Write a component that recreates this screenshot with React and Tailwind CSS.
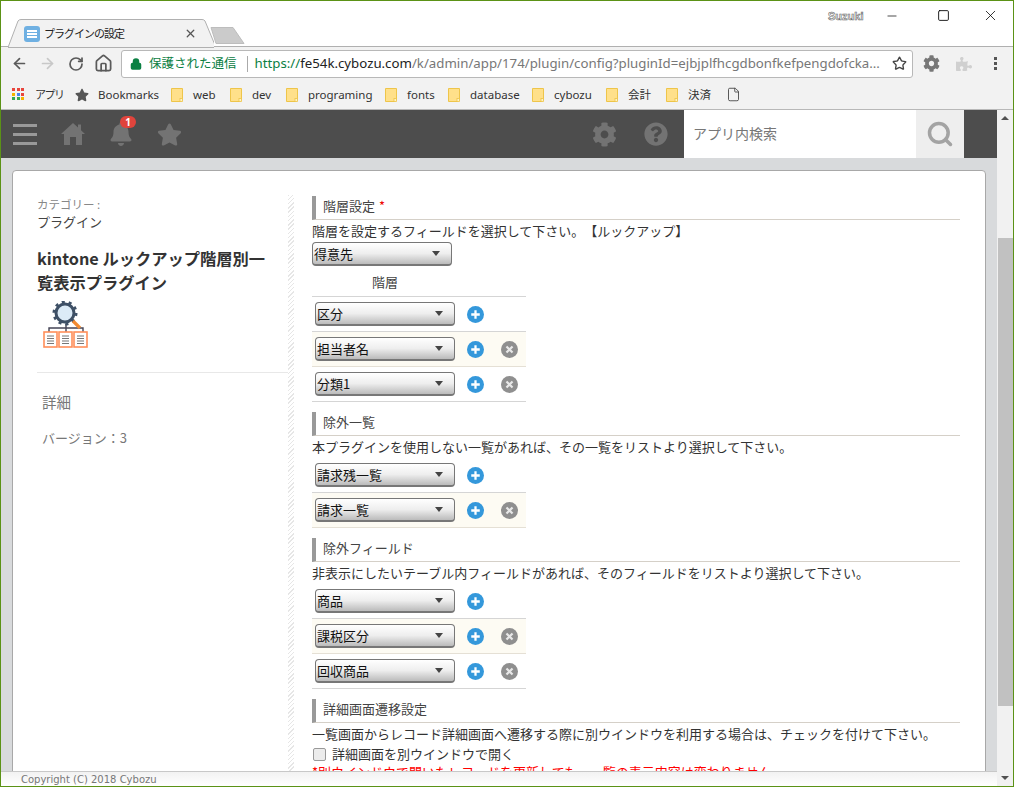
import { ArrowLeft, ArrowRight, RotateCw, Home, Star, Search, Lock, File, Minus, Square, X } from 'lucide-react';
import { FaBell, FaStar, FaCog, FaQuestionCircle, FaPuzzlePiece } from 'react-icons/fa';

function Folder() {
    return (
        <svg width="12" height="14" viewBox="0 0 12 14" className="shrink-0">
            <path d="M.5.5h11v11.5l-1.5 1.5H.5z" fill="#ffe08a" stroke="#eec54a" />
            <rect x="9" y="10.5" width="2.5" height="3" fill="#fff3c4" stroke="#eec54a" strokeWidth=".8" />
        </svg>
    );
}

function Bookmark({ label, width }) {
    return (
        <div className="flex items-center gap-[10px] shrink-0" style={{ width }}>
            <Folder />
            <span>{label}</span>
        </div>
    );
}

function AppsGrid() {
    const colors = ['#e8453c', '#e8453c', '#e8453c', '#f4b400', '#4285f4', '#e8453c', '#34a853', '#34a853', '#f4b400'];
    return (
        <div className="grid grid-cols-3 gap-[1px] w-[13px] h-[13px] shrink-0">
            {colors.map((c, i) => <span key={i} className="w-[3px] h-[3px]" style={{ backgroundColor: c }} />)}
        </div>
    );
}

function PluginSelect({ label, wide }) {
    return (
        <div className={`flex items-center justify-between h-[24px] rounded-[4px] border border-[#777] border-b-2 bg-gradient-to-b from-white via-[#eee] to-[#bbb] pl-[1px] pr-[11px] text-[13px] text-[#111] shrink-0 ${wide ? 'w-[140px]' : 'w-[140px] ml-[3px]'}`}>
            <span>{label}</span>
            <span className="w-0 h-0 border-x-[4px] border-x-transparent border-t-[5px] border-t-[#444]" />
        </div>
    );
}

function PlusBtn() {
    return (
        <svg width="17" height="17" viewBox="0 0 18 18" className="shrink-0">
            <circle cx="9" cy="9" r="9" fill="#3498db" />
            <path d="M9 4.500v9M4.500 9h9" stroke="#fff" strokeWidth="2.400" />
        </svg>
    );
}

function RemoveBtn() {
    return (
        <svg width="17" height="17" viewBox="0 0 18 18" className="shrink-0">
            <circle cx="9" cy="9" r="9" fill="#8f8f8f" />
            <path d="M5.800 5.800l6.400 6.400M12.200 5.800l-6.400 6.400" stroke="#e8e8e8" strokeWidth="2.400" />
        </svg>
    );
}

function Row({ label, removable, tinted }) {
    return (
        <div className={`w-[214px] h-[35px] pt-[5px] flex items-start gap-[12px] border-b ${tinted ? 'bg-[#fdfbf3] border-[#e5e0d5]' : 'border-[#d5d5d5]'}`}>
            <PluginSelect label={label} />
            <div className="flex gap-[17px] pt-[4px]">
                <PlusBtn />
                {removable && <RemoveBtn />}
            </div>
        </div>
    );
}

function SectionHead({ children }) {
    return (
        <div className="h-[24px] border-l-[4px] border-l-[#999] border-b border-b-[#d5d0c8] pl-[7px] text-[13px] leading-[20px] text-[#444] [text-spacing-trim:space-all]">
            {children}
        </div>
    );
}

function Desc({ children }) {
    return <p className="h-[22px] text-[13px] leading-[22px] text-[#333] whitespace-nowrap [text-spacing-trim:space-all]">{children}</p>;
}

function PluginLogo() {
    return (
        <svg width="46" height="47" viewBox="0 0 46 47">
            <path d="M6 31v-4h34v4M23 23v8" fill="none" stroke="#445" strokeWidth="1.400" />
            <circle cx="22" cy="12" r="9" fill="#dcebf7" stroke="#3e5066" strokeWidth="3" />
            <circle cx="22" cy="12" r="11" fill="none" stroke="#3e5066" strokeWidth="3" strokeDasharray="3 3.900" />
            <path d="M30 20l7 7" stroke="#f28a30" strokeWidth="3.200" />
            {[1, 16, 31].map(x => (
                <g key={x}>
                    <rect x={x} y="31" width="13" height="15" fill="#fff" stroke="#ff8f5a" strokeWidth="1.600" />
                    <path d={`M${x + 3} 35h7M${x + 3} 37.5h7M${x + 3} 40h7M${x + 3} 42.5h7`} stroke="#777" strokeWidth="1.200" />
                </g>
            ))}
        </svg>
    );
}

function KintoneHome() {
    return (
        <svg width="24" height="24" viewBox="0 0 24 24" className="ml-[24px] fill-[#737373]">
            <path d="M12 1l5 4.500V2.500h3v5.700l4 3.800h-3v11h-6v-8H9v8H3V12H0z" />
        </svg>
    );
}

export default function App() {
    return (
        <div className="w-[1014px] h-[787px] border border-[#5b9216] flex flex-col overflow-hidden bg-white font-['Noto_Sans_CJK_JP','Noto_Sans',sans-serif]">
            {/* window title + tabs */}
            <div className="h-[46px] relative shrink-0 border-b border-[#b0b0b0]">
                <div className="absolute left-[7px] top-[18px] w-[206px] h-[28px]">
                    <svg width="206" height="29" viewBox="0 0 206 29" className="absolute inset-0">
                        <path d="M0 28.500L10 2q1-1.500 3-1.500h181q2 0 3 1.500l11 26.500z" fill="#f2f2f2" stroke="#b0b0b0" />
                    </svg>
                    <div className="absolute left-[16px] top-[7px] w-[16px] h-[16px] rounded-[3px] bg-[#6fb0e2] flex flex-col justify-center items-center gap-[1px]">
                        <span className="w-[10px] h-[2px] bg-white" />
                        <span className="w-[10px] h-[2px] bg-white" />
                        <span className="w-[10px] h-[2px] bg-white" />
                    </div>
                    <span className="absolute left-[36px] top-[5px] text-[11px] tracking-[-1px] leading-[18px] text-[#222] whitespace-nowrap">プラグインの設定</span>
                    <X size={13} strokeWidth={2.4} className="absolute left-[176px] top-[8px] text-[#555]" />
                </div>
                <svg width="36" height="19" viewBox="0 0 36 19" className="absolute left-[209px] top-[25px]">
                    <path d="M1 1.500h22l11 16H6z" fill="#cbcbcb" stroke="#bdbdbd" />
                </svg>
                <span className="absolute left-[827px] top-[8px] text-[11px] leading-[15px] font-bold text-white [-webkit-text-stroke:0.6px_#666] font-['Liberation_Sans',sans-serif]">Suzuki</span>
                <Minus size={14} strokeWidth={1.2} className="absolute left-[884px] top-[8px] text-black" />
                <Square size={13} strokeWidth={1.6} className="absolute left-[936px] top-[8px] text-black" />
                <X size={17} strokeWidth={1.1} className="absolute left-[981px] top-[6px] text-black" />
            </div>

            {/* toolbar */}
            <div className="h-[33px] bg-[#f2f2f2] flex items-center shrink-0 pl-[10px] text-[#5a5a5a]">
                <ArrowLeft size={17} strokeWidth={2.4} />
                <ArrowRight size={17} strokeWidth={2.4} className="ml-[11px] text-[#c8c8c8]" />
                <RotateCw size={16} strokeWidth={2.6} className="ml-[12px]" />
                <Home size={19} strokeWidth={2.2} className="ml-[10px]" />
                <div className="ml-[8px] w-[792px] h-[28px] bg-white border border-[#b8b8b8] rounded-[3px] flex items-center pl-[8px] pr-[5px] text-[13.250px] whitespace-nowrap font-['Noto_Sans',sans-serif]">
                    <Lock size={12} strokeWidth={3} className="text-[#0b8043] fill-[#0b8043] shrink-0" />
                    <span className="ml-[7px] text-[12.500px] text-[#0b8043] font-['Noto_Sans_CJK_JP',sans-serif]">保護された通信</span>
                    <span className="ml-[10px] w-px h-[16px] bg-[#aaa]" />
                    <span className="ml-[7px] text-[#0b8043]">https://</span>
                    <span className="text-[#222]">fe54k.cybozu.com</span>
                    <span className="text-[#777] flex-1 overflow-hidden">/k/admin/app/174/plugin/config?pluginId=ejbjplfhcgdbonfkefpengdofcka...</span>
                    <Star size={15} strokeWidth={2.2} className="ml-[8px] text-[#444] shrink-0" />
                </div>
                <FaCog size={17} className="ml-[10px] text-[#777]" />
                <FaPuzzlePiece size={16} className="ml-[16px] text-[#d0d0d0]" />
                <div className="ml-[22px] flex flex-col gap-[2px]">
                    <span className="w-[3px] h-[3px] bg-[#555]" />
                    <span className="w-[3px] h-[3px] bg-[#555]" />
                    <span className="w-[3px] h-[3px] bg-[#555]" />
                </div>
            </div>

            {/* bookmarks */}
            <div className="h-[30px] bg-[#f2f2f2] border-b border-[#b8b8b8] flex items-center shrink-0 pl-[11px] text-[11.500px] text-[#333] whitespace-nowrap font-['Noto_Sans','Noto_Sans_CJK_JP',sans-serif]">
                <AppsGrid />
                <span className="ml-[10px] w-[40px] text-[11px] tracking-[-1.500px] pt-[2px]">アプリ</span>
                <FaStar size={14} className="text-[#555] shrink-0" />
                <span className="ml-[9px] w-[73px]">Bookmarks</span>
                <Bookmark label="web" width={59} />
                <Bookmark label="dev" width={56} />
                <Bookmark label="programing" width={99} />
                <Bookmark label="fonts" width={63} />
                <Bookmark label="database" width={84} />
                <Bookmark label="cybozu" width={74} />
                <Bookmark label="会計" width={60} />
                <Bookmark label="決済" width={60} />
                <File size={15} strokeWidth={1.4} className="text-[#444] shrink-0" />
            </div>

            <div className="flex flex-1 min-h-0">
                <div className="w-[996px] flex flex-col min-h-0">
                    {/* kintone header */}
                    <div className="h-[48px] bg-[#4d4d4d] flex items-center shrink-0 text-[#737373]">
                        <div className="ml-[12px] w-[24px] flex flex-col gap-[6px]">
                            <span className="h-[3px] bg-[#999]" />
                            <span className="h-[3px] bg-[#999]" />
                            <span className="h-[3px] bg-[#999]" />
                        </div>
                        <KintoneHome />
                        <div className="relative ml-[24px]">
                            <FaBell size={24} />
                            <span className="absolute -top-[6px] left-[11px] w-[16px] h-[12px] rounded-full bg-[#e0443c] text-white text-[10px] leading-[12px] text-center font-bold font-['Noto_Sans',sans-serif]">1</span>
                        </div>
                        <FaStar size={25} className="ml-[24px]" />
                        <FaCog size={25} className="ml-[410px]" />
                        <FaQuestionCircle size={24} className="ml-[27px]" />
                        <div className="ml-[16px] w-[232px] h-[48px] bg-white pl-[9px] pb-[2px] flex items-center text-[14px] text-[#777]">アプリ内検索</div>
                        <div className="w-[48px] h-[48px] bg-[#eeeeee] flex items-center justify-center">
                            <Search size={28} strokeWidth={3} className="text-[#a3a3a3]" />
                        </div>
                    </div>

                    {/* page */}
                    <div className="flex-1 min-h-0 overflow-hidden bg-[#d8dadc] pt-[12px] pl-[11px]">
                        <div className="w-[974px] h-[700px] bg-white border border-[#a8a8a8] rounded-t-[4px] flex pt-[25px] pl-[24px]">
                            <div className="w-[251px] shrink-0">
                                <div className="text-[11.500px] leading-[17px] text-[#888]">カテゴリー :</div>
                                <div className="text-[13px] leading-[17px] text-[#444]">プラグイン</div>
                                <h1 className="mt-[16px] w-[236px] text-[16.250px] leading-[24px] font-bold text-[#333]">kintone ルックアップ階層別一覧表示プラグイン</h1>
                                <div className="mt-[7px] ml-[6px]"><PluginLogo /></div>
                                <div className="mt-[24px] border-t border-[#e8e8e8]" />
                                <div className="mt-[19px] ml-[5px] text-[14.500px] leading-[20px] text-[#777]">詳細</div>
                                <div className="mt-[16px] ml-[5px] text-[13px] leading-[20px] text-[#777] [text-spacing-trim:space-all]">バージョン：3</div>
                            </div>
                            <div className="w-[6px] shrink-0 -mt-[1px] bg-[repeating-linear-gradient(135deg,#e6e6e6_0,#e6e6e6_1px,#ffffff_1px,#ffffff_3px)]" />
                            <div className="ml-[18px] w-[648px] shrink-0">
                                <SectionHead>階層設定 <span className="ml-[1px] text-[#e00]">*</span></SectionHead>
                                <Desc>階層を設定するフィールドを選択して下さい。【ルックアップ】</Desc>
                                <PluginSelect label="得意先" wide />
                                <div className="w-[214px] h-[31px] border-b border-[#d5d5d5] pt-[6px] pl-[60px] text-[13px] leading-[20px] text-[#444]">階層</div>
                                <Row label="区分" />
                                <Row label="担当者名" removable tinted />
                                <Row label="分類1" removable />

                                <div className="mt-[10px]"><SectionHead>除外一覧</SectionHead></div>
                                <Desc>本プラグインを使用しない一覧があれば、その一覧をリストより選択して下さい。</Desc>
                                <Row label="請求残一覧" />
                                <Row label="請求一覧" removable tinted />

                                <div className="mt-[10px]"><SectionHead>除外フィールド</SectionHead></div>
                                <Desc>非表示にしたいテーブル内フィールドがあれば、そのフィールドをリストより選択して下さい。</Desc>
                                <Row label="商品" />
                                <Row label="課税区分" removable tinted />
                                <Row label="回収商品" removable />

                                <div className="mt-[10px]"><SectionHead>詳細画面遷移設定</SectionHead></div>
                                <Desc>一覧画面からレコード詳細画面へ遷移する際に別ウインドウを利用する場合は、チェックを付けて下さい。</Desc>
                                <label className="flex items-center h-[18px] text-[13px] text-[#333]">
                                    <input type="checkbox" className="ml-[1px] w-[13px] h-[13px] appearance-none rounded-[2px] border border-[#999] bg-[#ececec]" />
                                    <span className="ml-[6px]">詳細画面を別ウインドウで開く</span>
                                </label>
                                <p className="text-[13px] leading-[18px] text-[#f00] whitespace-nowrap">*別ウインドウで開いたレコードを更新しても、一覧の表示内容は変わりません。</p>
                            </div>
                        </div>
                    </div>

                    {/* footer */}
                    <div className="h-[15px] bg-gradient-to-b from-[#f2f2f2] to-white border-t border-[#c8c8c8] shrink-0 pl-[20px] text-[10px] leading-[16px] text-[#777] font-['DejaVu_Sans',sans-serif]">Copyright (C) 2018 Cybozu</div>
                </div>

                {/* scrollbar */}
                <div className="flex-1 bg-[#f1f1f1] flex flex-col items-center pt-[6px] pb-[6px]">
                    <span className="w-0 h-0 border-x-[4px] border-x-transparent border-b-[4px] border-b-[#505050]" />
                    <div className="mt-[118px] w-[15px] h-[468px] bg-[#c1c1c1]" />
                    <span className="mt-auto w-0 h-0 border-x-[4px] border-x-transparent border-t-[4px] border-t-[#505050]" />
                </div>
            </div>
        </div>
    );
}
